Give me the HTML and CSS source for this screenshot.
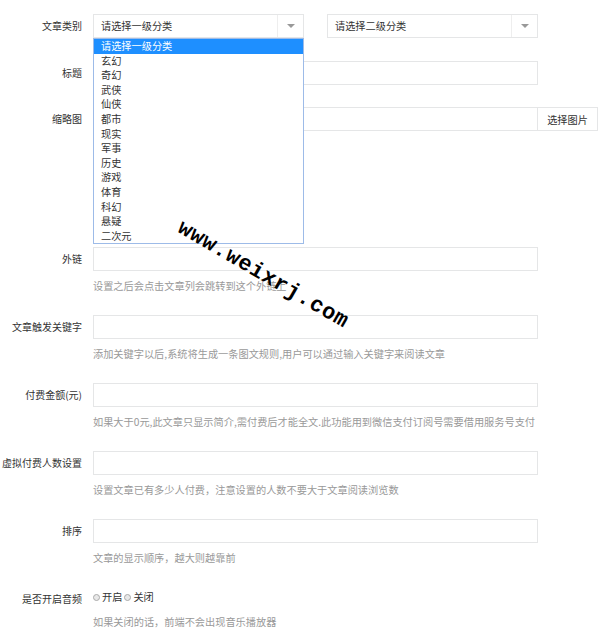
FILE: index.html
```html
<!DOCTYPE html>
<html lang="zh-CN">
<head>
    <meta charset="UTF-8">
    <meta name="viewport" content="width=device-width, initial-scale=1.0">
    <title>文章设置</title>
    <link rel="stylesheet" href="styles.css">
</head>
<body>
    <form class="form">
        <div class="group">
            <label class="label">文章类别</label>
            <div class="control selects">
                <div class="select-wrap">
                    <div class="select">
                        <span class="select-text">请选择一级分类</span>
                        <span class="select-arrow"></span>
                    </div>
                    <ul class="options">
                        <li class="active">请选择一级分类</li>
                        <li>玄幻</li>
                        <li>奇幻</li>
                        <li>武侠</li>
                        <li>仙侠</li>
                        <li>都市</li>
                        <li>现实</li>
                        <li>军事</li>
                        <li>历史</li>
                        <li>游戏</li>
                        <li>体育</li>
                        <li>科幻</li>
                        <li>悬疑</li>
                        <li>二次元</li>
                    </ul>
                </div>
                <div class="select-wrap">
                    <div class="select">
                        <span class="select-text">请选择二级分类</span>
                        <span class="select-arrow"></span>
                    </div>
                </div>
            </div>
        </div>

        <div class="group">
            <label class="label">标题</label>
            <div class="control"><input class="input" type="text"></div>
        </div>

        <div class="group">
            <label class="label">缩略图</label>
            <div class="control">
                <div class="input-group">
                    <input class="input" type="text">
                    <button type="button" class="btn">选择图片</button>
                </div>
                <div class="preview"></div>
            </div>
        </div>

        <div class="group has-help">
            <label class="label">外链</label>
            <div class="control">
                <input class="input" type="text">
                <p class="help">设置之后会点击文章列会跳转到这个外链上</p>
            </div>
        </div>

        <div class="group has-help">
            <label class="label">文章触发关键字</label>
            <div class="control">
                <input class="input" type="text">
                <p class="help">添加关键字以后,系统将生成一条图文规则,用户可以通过输入关键字来阅读文章</p>
            </div>
        </div>

        <div class="group has-help">
            <label class="label">付费金额(元)</label>
            <div class="control">
                <input class="input" type="text">
                <p class="help">如果大于0元,此文章只显示简介,需付费后才能全文.此功能用到微信支付订阅号需要借用服务号支付</p>
            </div>
        </div>

        <div class="group has-help">
            <label class="label">虚拟付费人数设置</label>
            <div class="control">
                <input class="input" type="text">
                <p class="help">设置文章已有多少人付费，注意设置的人数不要大于文章阅读浏览数</p>
            </div>
        </div>

        <div class="group has-help">
            <label class="label">排序</label>
            <div class="control">
                <input class="input" type="text">
                <p class="help">文章的显示顺序，越大则越靠前</p>
            </div>
        </div>

        <div class="group radio-group">
            <label class="label">是否开启音频</label>
            <div class="control">
                <div class="radios">
                    <label class="radio"><span class="dot"></span>开启</label>
                    <label class="radio"><span class="dot"></span>关闭</label>
                </div>
                <p class="help">如果关闭的话，前端不会出现音乐播放器</p>
            </div>
        </div>
    </form>

    <div class="watermark">www.weixrj.com</div>
</body>
</html>
```

FILE: styles.css
```css
* {
    margin: 0;
    padding: 0;
    box-sizing: border-box;
}

body {
    font-family: "Noto Sans CJK SC", "Microsoft YaHei", sans-serif;
    font-size: 10.2px;
    color: #333;
    background: #fff;
    width: 600px;
    height: 630px;
    overflow: hidden;
    position: relative;
}

.form {
    padding-top: 14px;
}

.group {
    display: grid;
    grid-template-columns: 82px 445px;
    column-gap: 11px;
    margin-bottom: 22px;
}

.group:first-child {
    margin-bottom: 23px;
}

.group.has-help {
    margin-bottom: 19px;
}

.label {
    text-align: right;
    line-height: 24px;
    font-size: 10px;
    color: #333;
    white-space: nowrap;
}

.input {
    display: block;
    width: 100%;
    height: 24px;
    border: 1px solid #e5e6e7;
    background: #fff;
    outline: none;
    font: inherit;
}

.help {
    margin-top: 5px;
    line-height: 20px;
    color: #999;
    white-space: nowrap;
}

/* selects */
.selects {
    display: flex;
    gap: 23px;
}

.select-wrap {
    position: relative;
    width: 211px;
}

.select {
    display: flex;
    height: 24px;
    border: 1px solid #e5e6e7;
    background: #fff;
}

.select-text {
    flex: 1;
    padding-left: 7px;
    line-height: 22px;
    color: #333;
}

.select-arrow {
    width: 26px;
    border-left: 1px solid #eee;
    position: relative;
}

.select-arrow::after {
    content: "";
    position: absolute;
    left: 9px;
    top: 9px;
    border-left: 4px solid transparent;
    border-right: 4px solid transparent;
    border-top: 4px solid #999;
}

.options {
    position: absolute;
    left: 0;
    top: 24px;
    width: 211px;
    list-style: none;
    background: #fff;
    border: 1px solid #9dbbe8;
    z-index: 5;
}

.options li {
    height: 14.6px;
    line-height: 14.6px;
    padding-left: 7px;
    color: #333;
}

.options li.active {
    background: #1e8fff;
    color: #fff;
}

/* thumbnail */
.input-group {
    display: flex;
    width: 505px;
}

.input-group .input {
    flex: 1;
    width: auto;
}

.btn {
    width: 60px;
    height: 24px;
    border: 1px solid #e5e6e7;
    border-left: none;
    background: #fff;
    color: #333;
    font: inherit;
}

.preview {
    height: 94px;
}

/* radios */
.radio-group .label {
    line-height: 20px;
    padding-top: 2px;
}

.radios {
    display: flex;
    gap: 2px;
    line-height: 20px;
}

.radio {
    display: flex;
    align-items: center;
}

.dot {
    width: 7px;
    height: 7px;
    margin-right: 2px;
    border: 1px solid #aaa;
    border-radius: 50%;
    background: #e8e8e8;
}

.watermark {
    position: absolute;
    left: 179px;
    top: 216px;
    z-index: 10;
    line-height: 22px;
    font-family: "Liberation Mono", monospace;
    font-weight: bold;
    font-size: 22px;
    letter-spacing: 0.6px;
    color: #000;
    transform-origin: 0 11px;
    transform: rotate(30deg);
    white-space: nowrap;
}
```
